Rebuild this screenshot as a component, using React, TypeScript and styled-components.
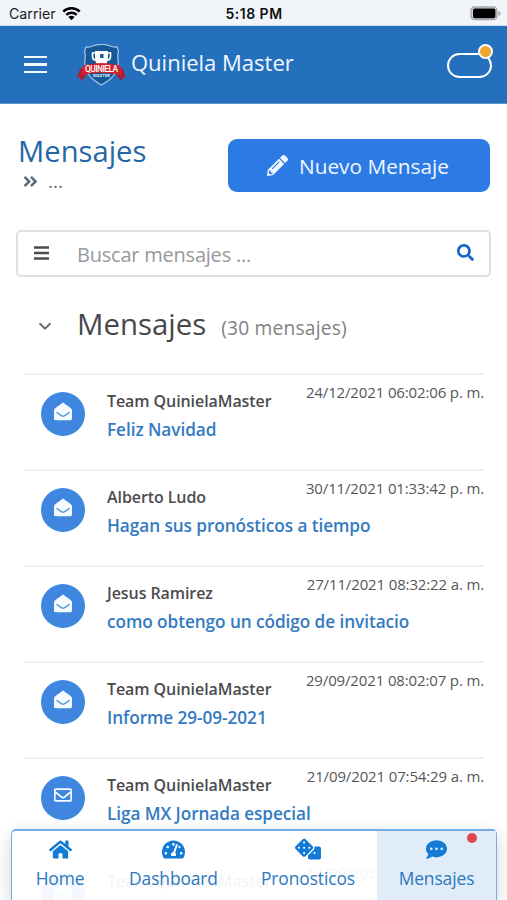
import React from "react";
import styled, { createGlobalStyle } from "styled-components";
import {
  FaAngleDoubleRight,
  FaCommentDots,
  FaDice,
  FaHome,
  FaPencilAlt,
  FaRegEnvelope,
  FaSearch,
  FaTachometerAlt,
} from "react-icons/fa";

const GlobalStyle = createGlobalStyle`
  * { box-sizing: border-box; }
  body {
    margin: 0;
    background: #fff;
    font-family: "Open Sans", sans-serif;
    overflow: hidden;
  }
  svg { display: block; flex: none; }
`;

const Screen = styled.div`
  position: relative;
  width: 507px;
  height: 900px;
  overflow: hidden;
  display: flex;
  flex-direction: column;
  background: #fff;
`;

const StatusBar = styled.div`
  height: 26px;
  flex: none;
  display: grid;
  grid-template-columns: 1fr auto 1fr;
  align-items: center;
  padding: 2px 6px 0 9px;
  background: #f1f5f9;
  font: 14.2px/20px Inter, sans-serif;
  color: #222;
  border-bottom: 1px solid #c9dbee;
`;
const Carrier = styled.div`
  display: flex;
  align-items: center;
  gap: 6px;
`;
const Clock = styled.div`
  padding-right: 2px;
  font-weight: 600;
  font-size: 14px;
  letter-spacing: 0.5px;
  color: #111;
`;
const BatterySlot = styled.div`
  justify-self: end;
`;

const Header = styled.header`
  height: 78px;
  flex: none;
  display: flex;
  align-items: center;
  padding: 0 15px 0 24px;
  background: #2470bd;
  border-bottom: 1px solid #5b93cd;
  color: #f1f7fd;
`;
const MenuButton = styled.div`
  width: 23px;
  height: 18px;
  margin-right: 30px;
  display: flex;
  flex-direction: column;
  justify-content: space-between;
`;
const MenuLine = styled.span`
  height: 2.4px;
  background: #f4f9ff;
`;
const Brand = styled.div`
  flex: 1;
  margin: -6px 0 0 5px;
  font-size: 22px;
  line-height: 30px;
  white-space: nowrap;
`;
const Pill = styled.div`
  position: relative;
  width: 45px;
  height: 25px;
  margin-top: 1px;
  border: 2.3px solid #fff;
  border-radius: 13px;
`;
const PillDot = styled.span`
  position: absolute;
  top: -11px;
  right: -3px;
  width: 15px;
  height: 15px;
  border: 2px solid #fff;
  border-radius: 50%;
  background: #efa52e;
`;

const TitleBar = styled.section`
  height: 126px;
  flex: none;
  display: flex;
  justify-content: space-between;
  padding: 35px 17px 0 18px;
`;
const PageTitle = styled.h1`
  margin: -8px 0 0;
  font-weight: 400;
  font-size: 29.2px;
  line-height: 40px;
  color: #2366a9;
`;
const Crumbs = styled.div`
  display: flex;
  align-items: center;
  gap: 9px;
  height: 20px;
  padding-left: 4px;
  font-size: 19px;
  line-height: 22px;
  color: #5d6d80;
`;
const NewButton = styled.button`
  width: 262px;
  height: 53px;
  display: flex;
  align-items: center;
  justify-content: center;
  gap: 11px;
  padding: 0 2px 1px 0;
  border: 0;
  border-radius: 9px;
  background: #2c7be5;
  color: #f1f7ff;
  font: 20.8px/30px "Open Sans", sans-serif;
`;
const ButtonLabel = styled.span`
  padding-top: 1px;
`;

const SearchBox = styled.div`
  height: 47px;
  flex: none;
  display: flex;
  align-items: center;
  margin: 0 16px;
  padding: 0 15px 2px 16px;
  border: 2px solid #e0e1e3;
  border-radius: 5px;
  color: #4a4b50;
`;
const Placeholder = styled.div`
  flex: 1;
  padding: 4px 0 0 28px;
  font-size: 20px;
  line-height: 28px;
  letter-spacing: -0.22px;
  color: #97999c;
`;

const ListHeading = styled.div`
  height: 96px;
  flex: none;
  display: flex;
  align-items: flex-start;
  padding: 27px 0 0 38px;
`;
const ChevronSlot = styled.div`
  padding-top: 18px;
`;
const Section = styled.h2`
  margin: 0 15px 0 25px;
  font-weight: 400;
  font-size: 29.4px;
  line-height: 40px;
  color: #46484c;
`;
const Count = styled.span`
  padding-top: 10px;
  font-size: 19.2px;
  line-height: 27px;
  letter-spacing: 0.2px;
  color: #808285;
`;

const List = styled.div`
  margin: 0 23px 0 24px;
`;
const Row = styled.article`
  height: 96px;
  display: flex;
  border-top: 2px solid #eff0f1;
  padding: 16.5px 0 0 17px;
`;
const Avatar = styled.div`
  width: 44px;
  height: 44px;
  flex: none;
  margin-right: 22px;
  padding-top: 10px;
  display: flex;
  justify-content: center;
  border-radius: 50%;
  background: #3f86e1;
  color: #f5faff;
`;
const Content = styled.div`
  flex: 1;
  min-width: 0;
`;
const Meta = styled.div`
  display: flex;
  justify-content: space-between;
  white-space: nowrap;
`;
const Sender = styled.div`
  margin-top: -2.5px;
  font-weight: 600;
  font-size: 16px;
  line-height: 24px;
  letter-spacing: -0.08px;
  color: #4b4c4f;
`;
const DateText = styled.time`
  margin-top: -11.5px;
  font-size: 15px;
  line-height: 24px;
  letter-spacing: -0.14px;
  color: #55575b;
`;
const Subject = styled.div`
  margin-top: 5px;
  font-weight: 600;
  font-size: 17.2px;
  line-height: 24px;
  letter-spacing: -0.06px;
  color: #337ac2;
`;

const NavBar = styled.nav`
  position: absolute;
  left: 11px;
  right: 10px;
  bottom: 0;
  height: 71px;
  display: grid;
  grid-template-columns: 96px 131px 138px 1fr;
  border: 2px solid #73afe5;
  border-right-width: 1px;
  border-left-width: 1px;
  border-bottom: 0;
  border-radius: 5px 5px 0 0;
  background: rgba(255, 255, 255, 0.94);
  box-shadow: 0 7px 18px rgba(60, 70, 90, 0.24);
`;
const NavItem = styled.div<{ $active?: boolean }>`
  position: relative;
  display: flex;
  flex-direction: column;
  align-items: center;
  padding-top: 6px;
  background: ${(p) => (p.$active ? "#e0edf8" : "transparent")};
  color: #127bd6;
`;
const NavIcon = styled.span`
  height: 24px;
  display: flex;
  align-items: center;
`;
const NavLabel = styled.span`
  margin-top: 5px;
  font-size: 17.4px;
  line-height: 24px;
  letter-spacing: -0.1px;
  color: #2b78bf;
`;
const Unread = styled.span`
  position: absolute;
  top: 2px;
  right: 19px;
  width: 10px;
  height: 10px;
  border-radius: 50%;
  background: #e2474d;
`;

const Wifi = () => (
  <svg width="19" height="15" viewBox="0 0 19 15">
    <path d="M1.300 5.600a11.600 11.600 0 0 1 16.400 0" fill="none" stroke="#000" strokeWidth="2.500" />
    <path d="M4.300 8.900a7.400 7.400 0 0 1 10.400 0" fill="none" stroke="#000" strokeWidth="2.400" />
    <path d="M9.500 14.200 6.400 11.100a4.400 4.400 0 0 1 6.200 0z" fill="#000" />
  </svg>
);

const Battery = () => (
  <svg width="31" height="15" viewBox="0 0 31 15">
    <rect x="1" y="1" width="26" height="12.6" rx="3.6" fill="#d2d2d3" stroke="#a5a6a8" strokeWidth="1.3" />
    <rect x="3" y="2.6" width="22.4" height="9.6" rx="1.8" fill="#000" />
    <path d="M28.5 5v5c1.3-.5 2-1.4 2-2.5s-.7-2-2-2.5z" fill="#a5a6a8" />
  </svg>
);

const Logo = () => (
  <svg width="49" height="42" viewBox="0 0 49 42">
    <path
      d="M9 3c4 .5 6-.5 8-1.500Q24.500-.5 32 1.500c2 1 4 2 8 1.500l1.500 4c-2 5 .5 9-.5 14-1 9-7 15-16.500 20C15 36 9 30 8 21 7 16 9.500 12 7.500 7z"
      fill="#155797"
      stroke="#a7c9ea"
      strokeWidth="1.200"
    />
    <path d="M18 7h13v8c0 4-3 5-4.500 6v2h-4v-2C21 20 18 19 18 15z" fill="#fff" />
    <path d="M18 9h-2.500v3c0 3 1 4 3 4M31 9h2.500v3c0 3-1 4-3 4" fill="none" stroke="#fff" strokeWidth="1.700" />
    <rect x="23" y="10" width="3.500" height="4" fill="#1d5d9d" />
    <path d="M8 23l-5 2-3 9 3-1 1 4 5-5zM41 23l5 2 3 9-3-1-1 4-5-5z" fill="#a91e30" />
    <path d="M6 21.500Q24.500 16.500 43 21.500l2.500 10Q24.500 26 3.500 31.500z" fill="#d1232f" />
    <text x="24.500" y="27.600" textAnchor="middle" textLength="33" lengthAdjust="spacing" fontFamily="Roboto, sans-serif" fontSize="8.400" fontWeight="500" fill="#fff">
      QUINIELA
    </text>
    <text x="24.500" y="33" textAnchor="middle" textLength="17" lengthAdjust="spacingAndGlyphs" fontFamily="Roboto, sans-serif" fontSize="3.600" fontWeight="700" fill="#e4effa">
      MASTER
    </text>
  </svg>
);

const OpenEnvelope = () => (
  <svg width="18" height="19" viewBox="0 0 18 19">
    <path
      d="M9 .5 16.600 6Q18 7 18 8.500v8a1.700 1.700 0 0 1-1.700 1.700H1.700A1.700 1.700 0 0 1 0 16.500v-8Q0 7 1.400 6z"
      fill="currentColor"
    />
    <path d="m2.500 10.300 5 3.400q1.500 1 3 0l5-3.400" fill="none" stroke="#3f86e1" strokeWidth="1.200" />
  </svg>
);

const Lines = () => (
  <svg width="15" height="14" viewBox="0 0 15 14">
    <path d="M0 1.500h15M0 7h15M0 12.500h15" stroke="currentColor" strokeWidth="2.400" />
  </svg>
);

const Chevron = () => (
  <svg width="14" height="9" viewBox="0 0 14 9">
    <path d="m1.500 1.200 5.500 5.500 5.500-5.500" fill="none" stroke="#6c6e72" strokeWidth="2" />
  </svg>
);

const messages = [
  { from: "Team QuinielaMaster", subject: "Feliz Navidad", date: "24/12/2021 06:02:06 p. m.", open: true },
  { from: "Alberto Ludo", subject: "Hagan sus pronósticos a tiempo", date: "30/11/2021 01:33:42 p. m.", open: true },
  { from: "Jesus Ramirez", subject: "como obtengo un código de invitacio", date: "27/11/2021 08:32:22 a. m.", open: true },
  { from: "Team QuinielaMaster", subject: "Informe 29-09-2021", date: "29/09/2021 08:02:07 p. m.", open: true },
  { from: "Team QuinielaMaster", subject: "Liga MX Jornada especial", date: "21/09/2021 07:54:29 a. m.", open: false },
  { from: "Team QuinielaMaster", subject: "", date: "14/09/2021 08:10:12 a. m.", open: true },
];

export default function App() {
  return (
    <Screen>
      <GlobalStyle />
      <StatusBar>
        <Carrier>
          Carrier <Wifi />
        </Carrier>
        <Clock>5:18 PM</Clock>
        <BatterySlot>
          <Battery />
        </BatterySlot>
      </StatusBar>
      <Header>
        <MenuButton>
          <MenuLine />
          <MenuLine />
          <MenuLine />
        </MenuButton>
        <Logo />
        <Brand>Quiniela Master</Brand>
        <Pill>
          <PillDot />
        </Pill>
      </Header>
      <TitleBar>
        <div>
          <PageTitle>Mensajes</PageTitle>
          <Crumbs>
            <FaAngleDoubleRight size={17} /> ...
          </Crumbs>
        </div>
        <NewButton>
          <FaPencilAlt size={21} />
          <ButtonLabel>Nuevo Mensaje</ButtonLabel>
        </NewButton>
      </TitleBar>
      <SearchBox>
        <Lines />
        <Placeholder>Buscar mensajes ...</Placeholder>
        <FaSearch size={17} color="#1266d0" />
      </SearchBox>
      <ListHeading>
        <ChevronSlot>
          <Chevron />
        </ChevronSlot>
        <Section>Mensajes</Section>
        <Count>(30 mensajes)</Count>
      </ListHeading>
      <List>
        {messages.map((m) => (
          <Row key={m.date}>
            <Avatar>{m.open ? <OpenEnvelope /> : <FaRegEnvelope size={18} />}</Avatar>
            <Content>
              <Meta>
                <Sender>{m.from}</Sender>
                <DateText>{m.date}</DateText>
              </Meta>
              <Subject>{m.subject}</Subject>
            </Content>
          </Row>
        ))}
      </List>
      <NavBar>
        <NavItem>
          <NavIcon>
            <FaHome size={23} />
          </NavIcon>
          <NavLabel>Home</NavLabel>
        </NavItem>
        <NavItem>
          <NavIcon>
            <FaTachometerAlt size={23} />
          </NavIcon>
          <NavLabel>Dashboard</NavLabel>
        </NavItem>
        <NavItem>
          <NavIcon>
            <FaDice size={26} />
          </NavIcon>
          <NavLabel>Pronosticos</NavLabel>
        </NavItem>
        <NavItem $active>
          <NavIcon>
            <FaCommentDots size={21} />
          </NavIcon>
          <NavLabel>Mensajes</NavLabel>
          <Unread />
        </NavItem>
      </NavBar>
    </Screen>
  );
}
